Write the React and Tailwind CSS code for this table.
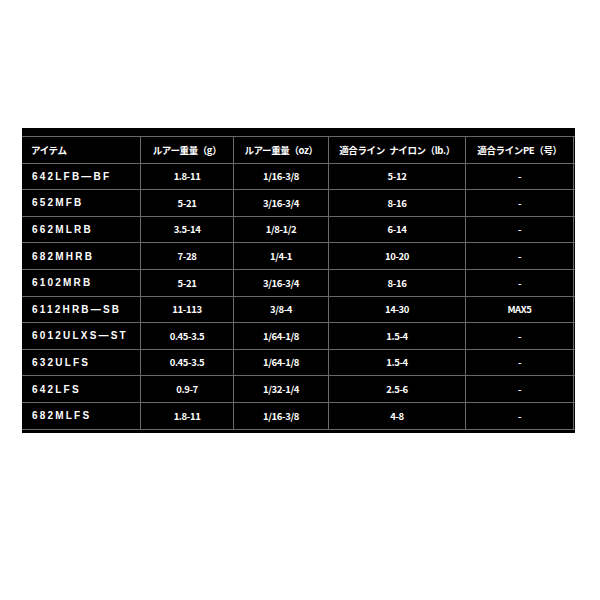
import React from "react";

const rows = [
  ["642LFB—BF", "1.8-11", "1/16-3/8", "5-12", "-"],
  ["652MFB", "5-21", "3/16-3/4", "8-16", "-"],
  ["662MLRB", "3.5-14", "1/8-1/2", "6-14", "-"],
  ["682MHRB", "7-28", "1/4-1", "10-20", "-"],
  ["6102MRB", "5-21", "3/16-3/4", "8-16", "-"],
  ["6112HRB—SB", "11-113", "3/8-4", "14-30", "MAX5"],
  ["6012ULXS—ST", "0.45-3.5", "1/64-1/8", "1.5-4", "-"],
  ["632ULFS", "0.45-3.5", "1/64-1/8", "1.5-4", "-"],
  ["642LFS", "0.9-7", "1/32-1/4", "2.5-6", "-"],
  ["682MLFS", "1.8-11", "1/16-3/8", "4-8", "-"],
];

const widths = ["w-[119px]", "w-[93px]", "w-[95px]", "w-[137px]", "w-[108px]"];

const font = { fontFamily: '"Noto Sans CJK JP", "Open Sans", sans-serif' };

function Row({ cells, header }) {
  return (
    <div className="flex h-[26.6px] border-b border-[#6a6a6a]">
      {cells.map((c, i) => (
        <div
          key={i}
          className={
            widths[i] +
            " flex items-center border-r border-[#6a6a6a] text-white font-bold whitespace-pre " +
            (i === 0
              ? header
                ? "justify-start pl-[9px] "
                : "justify-start pl-[10px] "
              : "justify-center ") +
            (i === 0 && !header
              ? "text-[10px] tracking-[2.2px]"
              : "text-[9.5px] tracking-[-0.04em]")
          }
          style={i === 0 && !header ? { fontFamily: '"Liberation Sans", Arial, sans-serif' } : font}
        >
          {c}
        </div>
      ))}
    </div>
  );
}

export default function App() {
  return (
    <div className="w-[600px] h-[600px] bg-white pt-[128px] pl-[22px]">
      <div className="w-[553px] h-[305px] bg-black pt-[8px]">
        <div className="border-t border-[#6a6a6a]">
          <Row
            header
            cells={[
              "アイテム",
              "ルアー重量（g）",
              "ルアー重量（oz）",
              "適合ライン\u2002ナイロン（lb.）",
              "適合ラインPE（号）",
            ]}
          />
          {rows.map((r, i) => (
            <Row key={i} cells={r} />
          ))}
        </div>
      </div>
    </div>
  );
}
